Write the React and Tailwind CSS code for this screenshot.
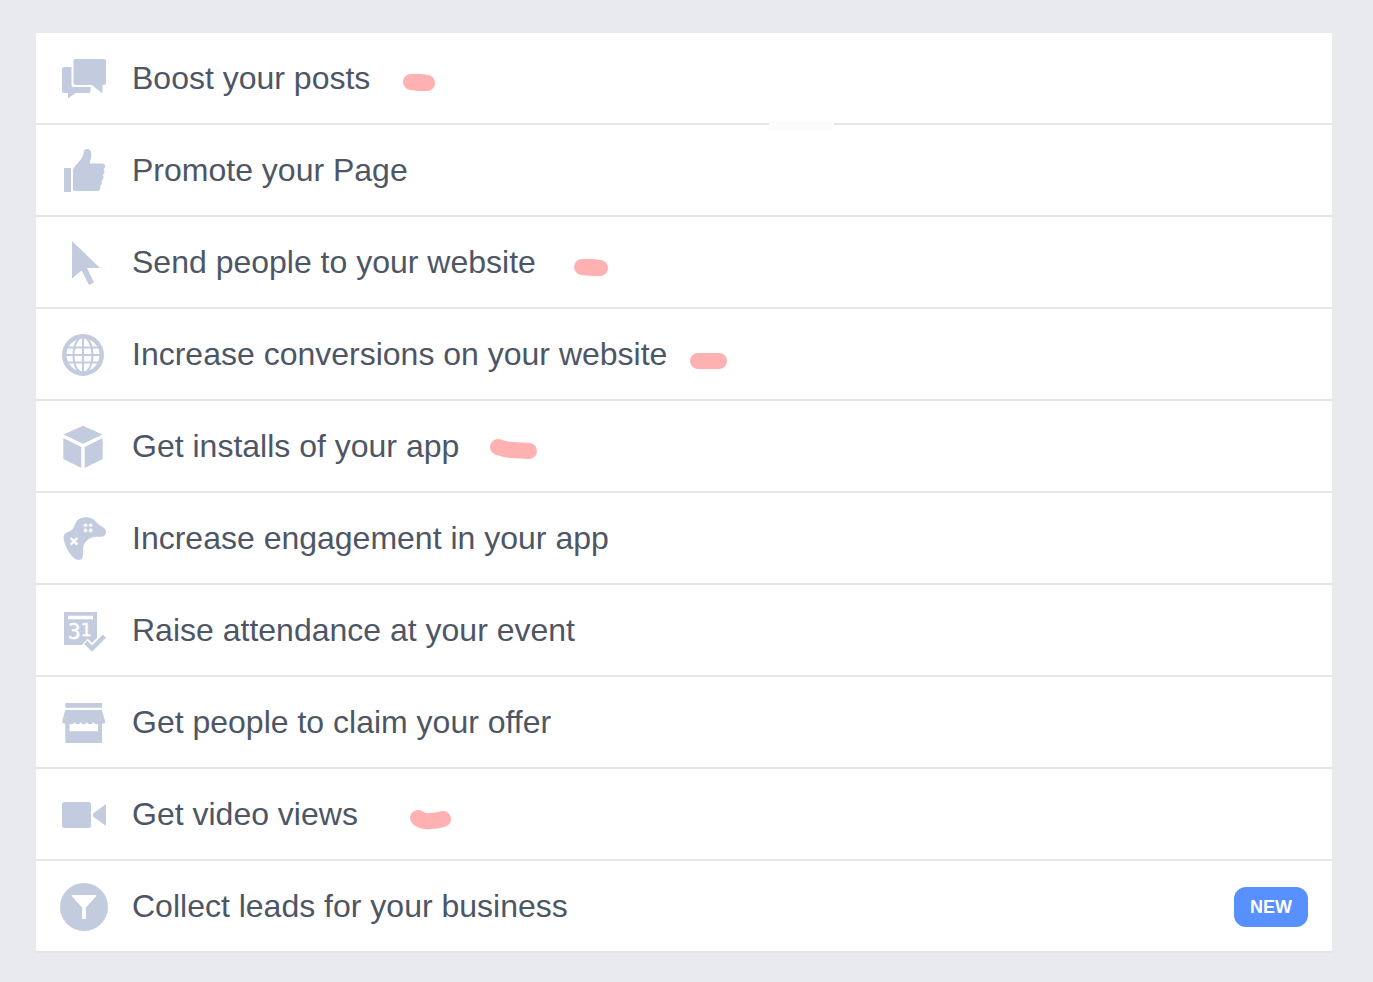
import React from 'react';

const PostsIcon = () => (
  <>
    <path d="M15.500 4h28.500a2 2 0 0 1 2 2v22a2 2 0 0 1-2 2h-1.500v8.500L32 30H15.500a2 2 0 0 1-2-2V6a2 2 0 0 1 2-2z" />
    <path d="M4 12h7.500v18a2 2 0 0 0 2 2h17v4a2 2 0 0 1-2 2H15.500L8 43.500V38H4a2 2 0 0 1-2-2V14a2 2 0 0 1 2-2z" />
  </>
);

const ThumbIcon = () => (
  <>
    <path d="M4 21h7v24H4z" />
    <path d="M13 24c0-2 1-3.500 2.500-5.500 2.500-3.200 6-6.200 7.300-9.500l1-4.500C24.300 2.800 25.400 2 27 2c2.500 0 4.400 2 4.400 4.800 0 4-1.200 6.500-1.700 9.700h12.200c2 0 3.300 1 3.300 2.500s-.7 2.500-1.700 3.300c1 .8 1.200 2.300.7 3.700-.3 1-.8 1.500-1.500 2 .9 1 1 2.300.6 3.600-.4 1.200-1.100 1.900-2.100 2.400.6 1 .7 2 .3 3.200-.3.900-.7 1.300-1.300 1.800.8 2.500-.7 5-2.500 5H15a2 2 0 0 1-2-2z" />
  </>
);

const CursorIcon = () => (
  <path d="M12 2l28 27h-13l7 14.500-5 2.500L21.700 31.500 12 39.500z" />
);

const GlobeIcon = () => (
  <g fill="none" stroke="currentColor" strokeWidth="2">
    <circle cx="23" cy="24" r="18.700" strokeWidth="4.500" />
    <ellipse cx="23" cy="24" rx="9.500" ry="18" />
    <path d="M23 5v38M4 16.500h38M4 24h38M4 31.500h38" />
  </g>
);

const BoxIcon = () => (
  <>
    <path d="M23 2.700l19.500 8.800L23 20.700 3.500 11.500z" />
    <path d="M3.300 15l18 9v21l-18-9z" />
    <path d="M42.700 15l-18 9v21l18-9z" />
  </>
);

const GamepadIcon = () => (
  <>
    <path d="M23.500 2.400c3-.4 6 .2 8.500 1.200 2.600 1.100 3.600 3.200 5.500 4.900 3.500 2.900 8.500 4.500 8.500 8.300 0 3.200-2 5-5 5-2.500 0-5-.2-7.500.4-3 .6-5.500 2-7.500 4.300-2.200 2.500-3 5-3 8.500 0 2.500.2 4.500-.4 6.800-.5 2.200-1.700 3.200-3.600 3.200-3 0-5-1.500-7-4-2-2.600-4-5-5.300-8C5.200 30 3.500 25.500 3.600 22c0-2.500 1.700-3.700 3.900-4.700 2.400-1.100 4.200-1.600 5.500-3.800 1.400-2.400 2-5.300 4-7.800 1.700-2 3.900-3 6.500-3.300z" />
    <g fill="white">
      <circle cx="25.500" cy="10.300" r="1.800" />
      <circle cx="30.700" cy="10.300" r="1.800" />
      <circle cx="25.500" cy="15.400" r="1.800" />
      <circle cx="30.700" cy="15.400" r="1.800" />
    </g>
    <path d="M10.700 23l6.600 6.600M17.300 23l-6.600 6.600" stroke="white" strokeWidth="2.400" />
  </>
);

const EventIcon = () => (
  <>
    <path d="M4 5h33v33H4z" />
    <path d="M8 8.700h25v3.600H8z" fill="white" />
    <g fill="white" stroke="white" strokeWidth="0.500" fontFamily="DejaVu Sans Mono">
      <text x="8" y="32" fontSize="21">3</text>
      <text x="20.500" y="29" fontSize="18">1</text>
    </g>
    <path d="M25 34.600l7 7L44.500 29.100" fill="none" stroke="white" strokeWidth="8" />
    <path d="M25.800 35.400l6.200 6.200L44.500 29.100" fill="none" stroke="currentColor" strokeWidth="4.400" />
  </>
);

const StoreIcon = () => (
  <>
    <path d="M5.300 4H42v4.800H5.300z" />
    <path d="M5.300 22H9.500v10.300H38V22h4v22H5.300z" />
    <path d="M5.300 11h36.500l3.600 12c-.6 2.200-4.600 2.200-6.200 0-.8 3-4.600 3-6.200 0-.9 3-4.800 3-6.200 0-.9 3-4.800 3-6.200 0-.9 3-4.800 3-6.200 0-.9 3-4.800 3-6.200 0-.9 2.200-4.800 2.200-6.200 0z" />
  </>
);

const VideoIcon = () => (
  <>
    <rect x="2" y="11" width="29" height="26" rx="2.500" />
    <path d="M46 13v22L33 25.500v-3z" />
  </>
);

const LeadsIcon = () => (
  <>
    <circle cx="24" cy="24" r="24" />
    <path d="M11.700 12h24.600v1L26 24.500V36h-4V24.500L11.700 13z" fill="white" />
  </>
);

// mark: the highlighter stroke drawn after the label
const objectives = [
  { id: 'posts', label: 'Boost your posts', icon: PostsIcon, mark: 'M21 27H30L37 28H30z' },
  { id: 'page', label: 'Promote your Page', icon: ThumbIcon },
  { id: 'traffic', label: 'Send people to your website', icon: CursorIcon, mark: 'M26 28H36L44 29H36z' },
  { id: 'conversions', label: 'Increase conversions on your website', icon: GlobeIcon, mark: 'M11 30H32' },
  { id: 'installs', label: 'Get installs of your app', icon: BoxIcon, mark: 'M19 24Q27 27 34 27L50 28' },
  { id: 'engagement', label: 'Increase engagement in your app', icon: GamepadIcon },
  { id: 'event', label: 'Raise attendance at your event', icon: EventIcon },
  { id: 'offer', label: 'Get people to claim your offer', icon: StoreIcon },
  { id: 'video', label: 'Get video views', icon: VideoIcon, mark: 'M40 27Q46 31 52 30Q58 30 65 28' },
  { id: 'leads', label: 'Collect leads for your business', icon: LeadsIcon, isNew: true },
];

function ObjectiveRow({ objective }) {
  const Icon = objective.icon;

  return (
    <li className="border-b-2 border-[#e5e5e5]">
      <button type="button" className="flex w-full items-center px-6 pt-[22px] pb-5 text-left">
        <svg viewBox="0 0 48 48" className="size-12 shrink-0 text-[#c3cbdf]" fill="currentColor" aria-hidden="true">
          <Icon />
        </svg>
        <span className="ml-6 pb-0.5 text-[32px] leading-10 text-[#4e5665]">{objective.label}</span>
        {objective.mark && (
          <svg viewBox="0 0 80 48" className="ml-5 h-12 w-20 shrink-0" fill="none" aria-hidden="true">
            <path d={objective.mark} stroke="#ffb1b1" strokeWidth="16" strokeLinecap="round" strokeLinejoin="round" />
          </svg>
        )}
        {objective.isNew && (
          <span className="ml-auto rounded-xl bg-[#5890ff] px-4 text-lg leading-10 font-bold text-white">NEW</span>
        )}
      </button>
    </li>
  );
}

export default function App() {
  return (
    <main className="min-h-screen bg-[#e9eaee] pt-[33px] pr-[41px] pb-7 pl-9 font-['Liberation_Sans',Arial,sans-serif]">
      <ul className="relative bg-white">
        {objectives.map((objective) => (
          <ObjectiveRow key={objective.id} objective={objective} />
        ))}
        <li className="absolute top-[88px] left-[733px] h-2 w-[65px] bg-[#fcfcfc]" aria-hidden="true" />
      </ul>
    </main>
  );
}
